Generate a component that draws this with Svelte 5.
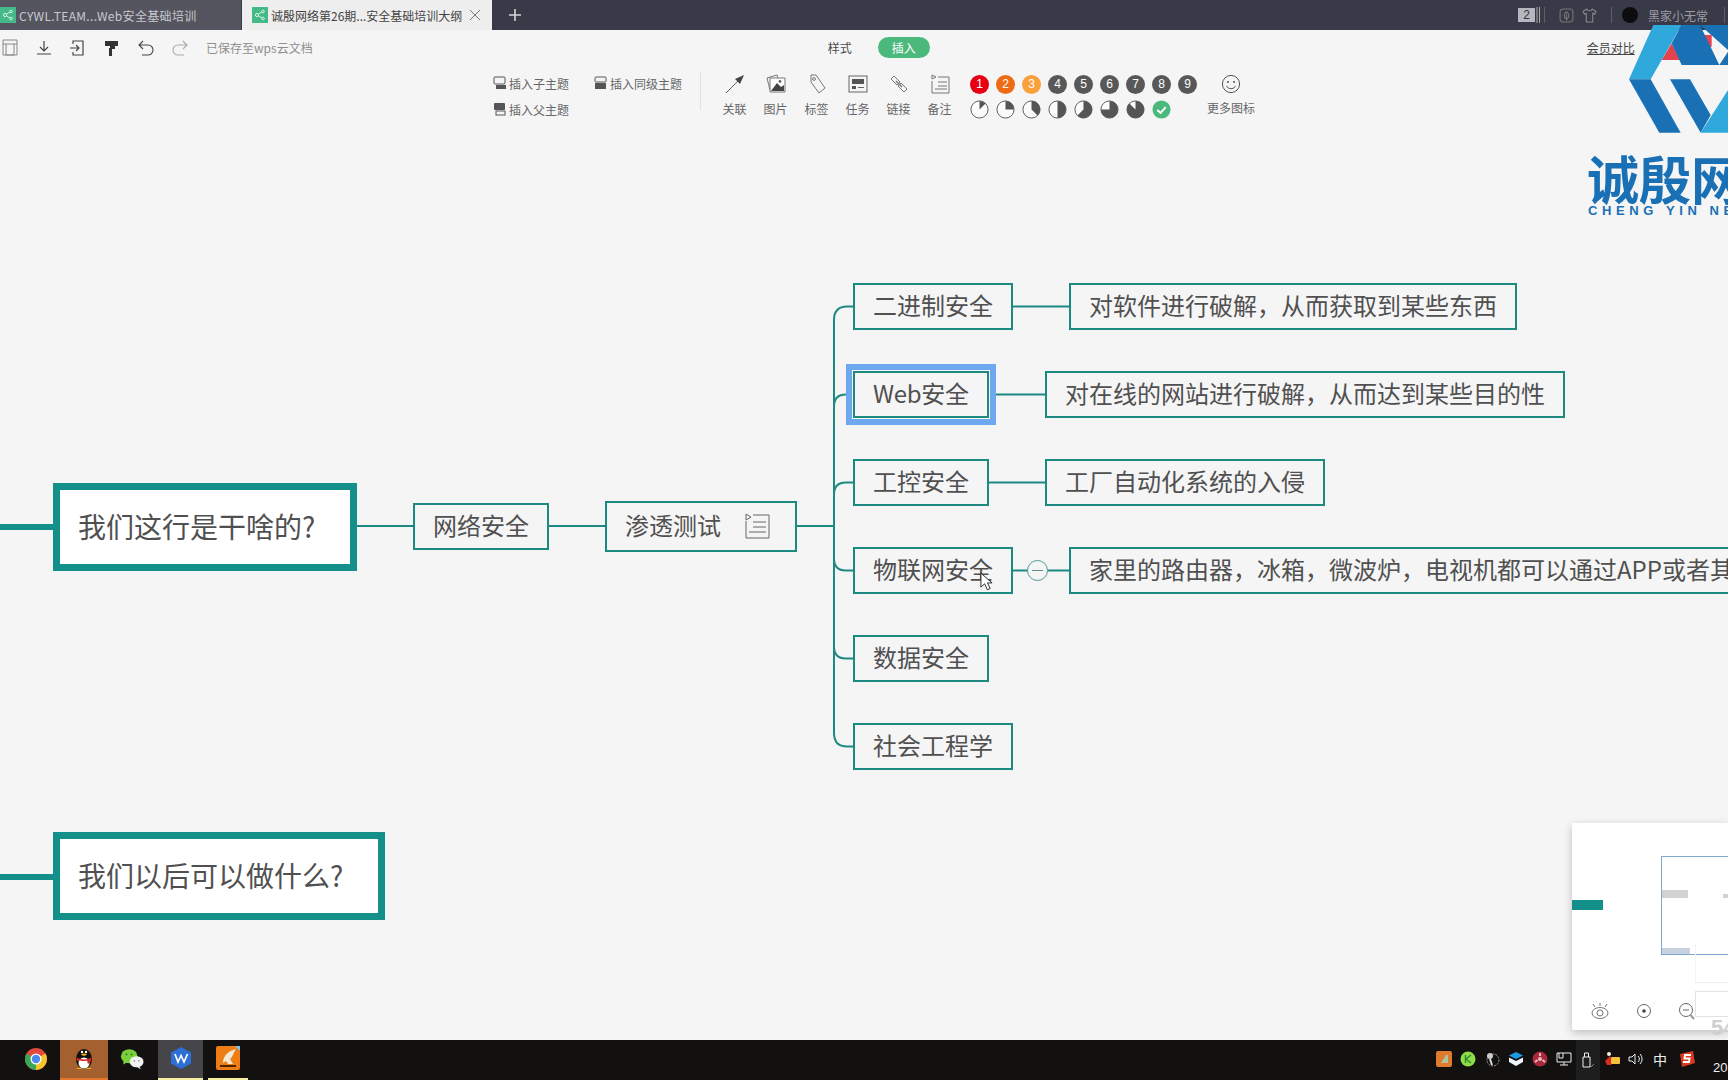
<script>
  const TOP = 126;
  const nodes = [
    { t: '二进制安全', x: 853, y: 283 },
    { t: 'Web安全', x: 853, y: 371, sel: true },
    { t: '工控安全', x: 853, y: 459 },
    { t: '物联网安全', x: 853, y: 547 },
    { t: '数据安全', x: 853, y: 635 },
    { t: '社会工程学', x: 853, y: 723 },
    { t: '对软件进行破解，从而获取到某些东西', x: 1069, y: 283 },
    { t: '对在线的网站进行破解，从而达到某些目的性', x: 1045, y: 371 },
    { t: '工厂自动化系统的入侵', x: 1045, y: 459 },
    { t: '家里的路由器，冰箱，微波炉，电视机都可以通过APP或者其它方式', x: 1069, y: 547 },
    { t: '网络安全', x: 413, y: 503 }
  ];
  const numbers = [
    { n: 1, c: '#e60012' }, { n: 2, c: '#ee6a15' }, { n: 3, c: '#f9a13a' },
    { n: 4, c: '#585858' }, { n: 5, c: '#585858' }, { n: 6, c: '#585858' },
    { n: 7, c: '#585858' }, { n: 8, c: '#585858' }, { n: 9, c: '#585858' }
  ];
  function pie(k) {
    const a = (k / 8) * 2 * Math.PI;
    const x = 10 + 9 * Math.sin(a);
    const y = 10 - 9 * Math.cos(a);
    return `M10 10 L10 1 A9 9 0 ${k > 4 ? 1 : 0} 1 ${x.toFixed(2)} ${y.toFixed(2)} Z`;
  }
  const downs = [394.5, 482.5];
  const ups = [570.5, 658.5];
</script>

<div class="app">
  <header class="titlebar">
    <div class="tab tab-off">
      <svg class="tabicon" viewBox="0 0 16 16"><rect width="16" height="16" fill="#45b987"/><g fill="none" stroke="#d9f5e8"><circle cx="5" cy="8" r="1.6"/><circle cx="11" cy="4.5" r="1.3"/><circle cx="11" cy="11.5" r="1.3"/><path d="M6.5 7.2 9.8 5M6.5 8.8 9.8 11"/></g></svg>
      <span>CYWL.TEAM...Web安全基础培训</span>
    </div>
    <div class="tab tab-on">
      <svg class="tabicon" viewBox="0 0 16 16"><rect width="16" height="16" fill="#45b987"/><g fill="none" stroke="#d9f5e8"><circle cx="5" cy="8" r="1.6"/><circle cx="11" cy="4.5" r="1.3"/><circle cx="11" cy="11.5" r="1.3"/><path d="M6.5 7.2 9.8 5M6.5 8.8 9.8 11"/></g></svg>
      <span>诚殷网络第26期...安全基础培训大纲</span>
      <svg class="close" viewBox="0 0 12 12"><path d="M1 1 11 11M11 1 1 11" stroke="#777" fill="none"/></svg>
    </div>
    <svg class="plus" viewBox="0 0 12 12"><path d="M6 0V12M0 6H12" stroke="#d5d5da" stroke-width="1.6"/></svg>
    <div class="grow"></div>
    <div class="badge">2</div>
    <svg class="bars" viewBox="0 0 6 16"><path d="M1 0V16M3.5 0V16" stroke="#aaa"/></svg>
    <div class="vsep first"></div>
    <svg class="ticon" viewBox="0 0 14 14"><rect x="1" y="1" width="12" height="12" rx="3" fill="none" stroke="#777"/><path d="M7 3.500C9.500 5 10 9 7 10.500 4 9 4.500 5 7 3.500ZM7 6V12" fill="none" stroke="#777"/></svg>
    <svg class="ticon shirt" viewBox="0 0 14 14"><path d="M4.5 1 1 3.2l1.3 2.6L4 5v8h6V5l1.7.8L13 3.2 9.5 1C9 3 5 3 4.5 1Z" fill="none" stroke="#888"/></svg>
    <div class="vsep second"></div>
    <div class="avatar"></div>
    <span class="user">黑家小无常</span>
    <div class="vsep last"></div>
  </header>

  <section class="toolbar">
    <div class="row-top">
      <div class="quick">
        <svg viewBox="0 0 18 18"><path d="M2 1H16V16H2ZM2 5H16M5 5V16H13V5" fill="none" stroke="#888"/></svg>
        <svg viewBox="0 0 18 18"><path d="M9 2V11M5 8l4 4 4-4M2 15H16" fill="none" stroke="#444" stroke-width="1.2"/></svg>
        <svg viewBox="0 0 18 18"><path d="M4 5V2H14V16H4V13M1 9H10M7 6l3 3-3 3" fill="none" stroke="#444" stroke-width="1.2"/></svg>
        <svg viewBox="0 0 18 18"><path d="M2 2H15V7H2ZM7 7H12V10H9V17H6V9H7Z" fill="#333"/></svg>
        <svg viewBox="0 0 18 18"><path d="M6 2 2 6l4 4M2 6H11a4.5 4.5 0 0 1 0 10H5" fill="none" stroke="#444" stroke-width="1.1"/></svg>
        <svg viewBox="0 0 18 18"><path d="M12 2l4 4-4 4M16 6H7a4.5 4.5 0 0 0 0 10H13" fill="none" stroke="#aaa" stroke-width="1.1"/></svg>
        <span class="saved">已保存至wps云文档</span>
      </div>
      <div class="mode">
        <span class="style-tab">样式</span>
        <span class="pill">插入</span>
      </div>
      <u class="vip">会员对比</u>
    </div>
    <div class="ribbon">
      <div class="inserts">
        <div class="ins ins-a">
          <svg viewBox="0 0 14 14"><rect x="1" y="1" width="11" height="7" rx="1" fill="none" stroke="#555"/><rect x="3" y="9" width="10" height="4" fill="#555"/></svg>插入子主题
        </div>
        <div class="ins ins-b">
          <svg viewBox="0 0 14 14"><rect x="1" y="1" width="11" height="5" rx="1" fill="none" stroke="#555"/><rect x="1" y="7" width="11" height="6" fill="#555"/></svg>插入同级主题
        </div>
        <div class="ins ins-c">
          <svg viewBox="0 0 14 14"><rect x="1" y="1" width="11" height="7" rx="1" fill="#555"/><rect x="3" y="9" width="9" height="4" fill="none" stroke="#555"/></svg>插入父主题
        </div>
      </div>
      <div class="divider"></div>
      <div class="tools">
        <div class="tool">
          <svg viewBox="0 0 22 22"><path d="M2 20 17 5" stroke="#666" stroke-width="1"/><path d="M20 2 11 6l5 5Z" fill="#444"/></svg>
          <span>关联</span>
        </div>
        <div class="tool">
          <svg viewBox="0 0 22 22"><path d="M2 5 12 2l1 3M2 5 5 17" fill="none" stroke="#777"/><path d="M5 5H20V19H5Z" fill="#fff" stroke="#777"/><path d="M6 18 12 10l4 4 3-2v6Z" fill="#444"/><circle cx="15" cy="8.5" r="1.4" fill="#666"/></svg>
          <span>图片</span>
        </div>
        <div class="tool">
          <svg viewBox="0 0 22 22"><path d="M5 2H10L19 15 13 20 5 9Z" fill="none" stroke="#777"/><circle cx="8" cy="6" r="1.4" fill="none" stroke="#777"/></svg>
          <span>标签</span>
        </div>
        <div class="tool">
          <svg viewBox="0 0 22 22"><rect x="2" y="3" width="18" height="16" fill="none" stroke="#666"/><rect x="5" y="6" width="12" height="5" fill="#555"/><rect x="5" y="13" width="4" height="3" fill="#555"/><path d="M11 14.5H17" stroke="#666"/></svg>
          <span>任务</span>
        </div>
        <div class="tool">
          <svg viewBox="0 0 22 22"><g fill="none" stroke="#777"><path d="M3 6 6 3l6 6-3 3ZM10 13l3-3 6 6-3 3Z"/><path d="M8 8l6 6" stroke-width="1.4"/></g></svg>
          <span>链接</span>
        </div>
        <div class="tool">
          <svg viewBox="0 0 22 22"><path d="M3 8V20H20V4H9M9 9H18M9 13H18M6 16H18" fill="none" stroke="#777"/><path d="M3 2 7 4 3 6Z" fill="none" stroke="#777"/></svg>
          <span>备注</span>
        </div>
      </div>
      <div class="marks">
        <div class="marks-row">
          {#each numbers as m}
            <span class="num" style="background:{m.c}">{m.n}</span>
          {/each}
        </div>
        <div class="marks-row">
          {#each [1, 2, 3, 4, 5, 6, 7] as k}
            <svg class="pie" viewBox="0 0 20 20"><circle cx="10" cy="10" r="9" fill="#fbfbfb" stroke="#555"/><path d={pie(k)} fill="#555"/></svg>
          {/each}
          <svg class="pie" viewBox="0 0 20 20"><circle cx="10" cy="10" r="9.5" fill="#4cb97c"/><path d="M5.5 10.5 9 13.5 14.5 7.5" fill="none" stroke="#fff" stroke-width="2"/></svg>
        </div>
      </div>
      <div class="more">
        <svg viewBox="0 0 20 20"><circle cx="10" cy="10" r="8.6" fill="none" stroke="#555"/><circle cx="7" cy="8" r="1" fill="#555"/><circle cx="13" cy="8" r="1" fill="#555"/><path d="M5.5 12a5 5 0 0 0 9 0" fill="none" stroke="#555"/></svg>
        <span>更多图标</span>
      </div>
    </div>
  </section>

  <main class="canvas">
    <svg class="links" viewBox="0 126 1728 914">
      <path class="thick" d="M0 527H54M0 877H54"/>
      <path class="thin" d="M357 526H413M548 526H606M796 526H834"/>
      <path class="thin" d="M853 306.5H847Q834 306.5 834 320V733Q834 746.5 847 746.5H853"/>
      {#each downs as y}
        <path class="thin" d="M853 {y}H846Q834 {y} 834 {y + 12}"/>
      {/each}
      {#each ups as y}
        <path class="thin" d="M853 {y}H846Q834 {y} 834 {y - 12}"/>
      {/each}
      <path class="thin" d="M1012 306.5H1069M989 394.5H1045M989 482.5H1045M1012 570.5H1028M1048 570.5H1069"/>
    </svg>

    {#each nodes as n}
      <div class="node" class:sel={n.sel} style="left:{n.x}px;top:{n.y - TOP}px">{n.t}</div>
    {/each}

    <div class="node tall" style="left:605px;top:{501 - TOP}px">
      <span>渗透测试</span>
      <svg viewBox="0 0 26 26"><path d="M2 8V25H25V2H9M9 9H22M9 14H22M5 19H22" fill="none" stroke="#666"/><path d="M2 1 7 4 2 7Z" fill="none" stroke="#666"/></svg>
    </div>
    <div class="root" style="left:53px;top:{483 - TOP}px">我们这行是干啥的?</div>
    <div class="root" style="left:53px;top:{832 - TOP}px">我们以后可以做什么?</div>

    <div class="fold"><span></span></div>

    <svg class="cursor" viewBox="0 0 14 20"><path d="M1 1V16L5 12.5 8 19 11 17.5 8 11.5H13Z" fill="#fff" stroke="#222"/></svg>

    <aside class="minimap">
      <div class="mm-teal"></div>
      <div class="mm-view">
        <div class="mm-grey"></div>
        <div class="mm-dot"></div>
        <div class="mm-base"></div>
      </div>
      <div class="mm-lines"></div>
      <div class="mm-box"></div>
      <svg class="mm-ic eye" viewBox="0 0 18 18"><g fill="none" stroke="#666" stroke-width=".9"><ellipse cx="9" cy="11" rx="8" ry="5.5"/><circle cx="9" cy="11" r="3"/><path d="M2 2 4 5M9 1V4M16 2 14 5"/></g></svg>
      <svg class="mm-ic target" viewBox="0 0 18 18"><circle cx="9" cy="9" r="6.5" fill="none" stroke="#666"/><circle cx="9" cy="9" r="1.8" fill="#444"/></svg>
      <svg class="mm-ic zoom" viewBox="0 0 18 18"><circle cx="8" cy="8" r="6.5" fill="none" stroke="#666"/><path d="M5 8H11" stroke="#666"/><path d="M12.5 13 16 17" stroke="#999" stroke-width="2"/></svg>
    </aside>
    <span class="scale">54</span>
  </main>

  <footer class="taskbar">
    <div class="apps">
      <div class="app-slot">
        <svg viewBox="0 0 24 24"><circle cx="12" cy="12" r="11" fill="#e2483b"/><path d="M12 12 21.5 6.5A11 11 0 0 1 12 23Z" fill="#f5c52e"/><path d="M12 12 12 23A11 11 0 0 1 2.5 6.5Z" fill="#3aa757"/><circle cx="12" cy="12" r="5.5" fill="#fff"/><circle cx="12" cy="12" r="4.2" fill="#4b8bf0"/></svg>
      </div>
      <div class="app-slot qq">
        <svg viewBox="0 0 24 24"><ellipse cx="12" cy="13" rx="8" ry="10" fill="#111"/><ellipse cx="12" cy="17" rx="5.5" ry="5.5" fill="#fff"/><path d="M4.5 11.5Q12 15.5 19.5 11.5L19 15 16 18 15 14.5Q12 15.5 8 14.5L5 15Z" fill="#d92a21"/><path d="M9 8.5Q12 6.5 15 8.5 12 11 9 8.5Z" fill="#f6b21c"/><circle cx="10" cy="6" r="1.2" fill="#fff"/><circle cx="14" cy="6" r="1.2" fill="#fff"/><path d="M5 22h5l-1 1H5ZM14 22h5v1h-4Z" fill="#f6b21c"/></svg>
      </div>
      <div class="app-slot">
        <svg viewBox="0 0 26 24"><ellipse cx="10" cy="9" rx="9" ry="7.5" fill="#7ad03a"/><path d="M4 14 3.5 18 8 15.5Z" fill="#7ad03a"/><ellipse cx="18" cy="15" rx="7.5" ry="6" fill="#f2f2f2"/><path d="M21 19.5 22.5 23 18 20.5Z" fill="#f2f2f2"/><circle cx="7" cy="7" r="1" fill="#256b10"/><circle cx="12.5" cy="7" r="1" fill="#256b10"/><circle cx="15.5" cy="14" r=".9" fill="#888"/><circle cx="20.5" cy="14" r=".9" fill="#888"/></svg>
      </div>
      <div class="app-slot wps">
        <svg viewBox="0 0 24 24"><path d="M12 1 22 6.5V17.5L12 23 2 17.5V6.5Z" fill="#2d6fd6"/><path d="M6 8 9 16 12 9.5 15 16 18.5 8" fill="none" stroke="#fff" stroke-width="1.7"/></svg>
      </div>
      <div class="app-slot last-app">
        <svg viewBox="0 0 24 24"><rect width="24" height="24" rx="2" fill="#ee7d13"/><path d="M7 17C7 10 12 5 20 3 17 7 17 11 14 13L17 18H12L10 15Z" fill="#f3e9d8"/><path d="M19 0h5v5Z" fill="#7cc4ea"/><path d="M4 20H20" stroke="#4a2500" stroke-width="2"/></svg>
      </div>
    </div>
    <div class="tray">
      <svg viewBox="0 0 16 16"><rect width="16" height="16" rx="2" fill="#e07b2e"/><path d="M5 12 10 4h2v8Z" fill="#a9c6a0"/></svg>
      <svg viewBox="0 0 16 16"><circle cx="8" cy="8" r="7.5" fill="#8fdc4a"/><path d="M5.5 4V12M11 4 6 8l5 4" fill="none" stroke="#2b8a2b" stroke-width="1.4"/></svg>
      <svg viewBox="0 0 16 16"><circle cx="9" cy="9" r="6" fill="none" stroke="#999" stroke-dasharray="2 1"/><circle cx="6" cy="5" r="3" fill="#ccc"/><path d="M6 8 8 14" stroke="#ddd" stroke-width="2"/></svg>
      <svg viewBox="0 0 16 16"><path d="M8 1 15 4.5 8 8 1 4.5Z" fill="#1d9be2"/><path d="M1 6.5 8 10 15 6.5V11L8 15 1 11Z" fill="#eef6fb"/></svg>
      <svg viewBox="0 0 16 16"><circle cx="8" cy="8" r="7.5" fill="#a8283c"/><circle cx="8" cy="8" r="2" fill="#eeb9c0"/><path d="M8 2V5M3 11l2.5-2M13 11l-2.5-2" stroke="#eeb9c0" stroke-width="2"/></svg>
      <svg viewBox="0 0 16 16"><path d="M1 2H15V11H1ZM3 2V7H7V2M8 11V14M4 14H12" fill="none" stroke="#eee"/></svg>
      <div class="usb"><svg viewBox="0 0 16 16"><path d="M3 5H10V15H3ZM4.500 5V1H8.500V5" fill="none" stroke="#eee"/><path d="M11 15l3-3" stroke="#888"/></svg></div>
      <svg viewBox="0 0 16 16"><path d="M1 10 6 5l3 5-2 4H3Z" fill="#d92a21"/><circle cx="5" cy="3" r="2" fill="#f3f0d8"/><rect x="7" y="6" width="9" height="7" rx="1" fill="#f4c13a"/></svg>
      <svg viewBox="0 0 16 16"><path d="M1 6H4L7 3V13L4 10H1Z" fill="none" stroke="#eee"/><path d="M10 5a4 4 0 0 1 0 6M12 3a7 7 0 0 1 0 10" fill="none" stroke="#eee"/></svg>
      <span class="ime">中</span>
      <svg class="sogou" viewBox="0 0 16 16"><path d="M1 3 14 0 16 12 3 16Z" fill="#d93a20"/><path d="M12 4H6L5.500 7.500H10.500L10 11H4" fill="none" stroke="#fff" stroke-width="2"/></svg>
      <span class="clock">20</span>
    </div>
  </footer>

  <div class="logo">
    <svg viewBox="0 0 864 420">
      <path d="M665 180 720 180 695 130Z" fill="#e2434f"/>
      <path d="M745 105H815V140H765Z" fill="#e2434f"/>
      <text x="757" y="138" class="logo-red">+加会</text>
      <path d="M640 75H725L632 238H567Z" fill="#2fa8dc"/>
      <path d="M567 238H632L722 398H658Z" fill="#1a70b5"/>
      <path d="M725 75 695 130 725 195H864V155L838 195 780 75Z" fill="#1a70b5"/>
      <path d="M780 75H864V150Z" fill="#1a70b5"/>
      <path d="M690 238H750L812 345 782 398Z" fill="#1a70b5"/>
      <path d="M782 398 864 270V398Z" fill="#2fa8dc"/>
    </svg>
    <div class="logo-cn">诚殷网</div>
    <div class="logo-en">CHENG YIN NE</div>
  </div>
</div>

<style>
  :global(body) { margin: 0; background: #f5f5f6; overflow: hidden; }
  .app {
    position: relative; width: 1728px; height: 1080px; overflow: hidden;
    display: flex; flex-direction: column;
    font-family: "Noto Sans CJK SC", "Liberation Sans", sans-serif; color: #4a4a4a;
  }
  .titlebar { height: 30px; background: #393a47; display: flex; align-items: center; flex: none; }
  .tab { height: 30px; display: flex; align-items: center; font-size: 12px; box-sizing: border-box; }
  .tabicon { width: 16px; height: 16px; flex: none; margin-right: 3px; }
  .tab-off { width: 241px; background: #55555f; color: #c9c9cf; margin-right: 1px; letter-spacing: .34px; }
  .tab-on { width: 250px; background: #eeeeee; color: #444; padding-left: 10px; }
  .close { width: 12px; height: 12px; margin-left: 7px; }
  .plus { width: 12px; height: 12px; margin-left: 17px; }
  .grow { flex: 1; }
  .badge { width: 17px; height: 14px; background: #b5b6bf; color: #333; font: 12px/14px "Liberation Sans", sans-serif; text-align: center; }
  .bars { width: 6px; height: 16px; margin-left: 1px; }
  .vsep { width: 1px; height: 16px; background: #5c5d69; }
  .vsep.first { margin: 0 14px 0 2px; }
  .vsep.second { margin: 0 10px 0 14px; }
  .vsep.last { margin: 0 3px 0 16px; }
  .ticon { width: 15px; height: 15px; }
  .shirt { margin-left: 8px; }
  .avatar { width: 16px; height: 16px; border-radius: 50%; background: #0c0c0e; }
  .user { font-size: 12px; color: #9b9ca6; margin-left: 10px; }

  .toolbar { height: 96px; flex: none; background: #f5f5f6; border-bottom: 1px solid #e4e4e4; box-sizing: content-box; margin-bottom: -1px; }
  .row-top { height: 35px; display: flex; align-items: center; position: relative; }
  .quick { display: flex; align-items: center; gap: 16px; padding-left: 1px; }
  .quick svg { width: 18px; height: 18px; }
  .saved { font-size: 12px; color: #8f8f8f; margin-left: 1px; }
  .mode { display: flex; align-items: center; gap: 26px; margin-left: 515px; }
  .style-tab { font-size: 12px; }
  .pill { width: 52px; height: 21px; border-radius: 11px; background: #4cb97c; color: #fff; font-size: 12px; line-height: 21px; text-align: center; }
  .vip { font-size: 12px; margin-left: 657px; color: #444; }

  .ribbon { height: 61px; display: flex; align-items: flex-start; }
  .inserts { position: relative; width: 700px; height: 60px; flex: none; font-size: 12px; color: #666; }
  .ins { position: absolute; display: flex; align-items: center; gap: 2px; height: 16px; }
  .ins svg { width: 14px; height: 14px; }
  .ins-a { left: 493px; top: 10px; }
  .ins-b { left: 594px; top: 10px; }
  .ins-c { left: 493px; top: 36px; }
  .divider { width: 1px; height: 38px; margin-top: 7px; background: #e2e2e2; flex: none; }
  .tools { display: flex; margin-left: 13px; flex: none; }
  .tool { width: 41px; display: flex; flex-direction: column; align-items: center; font-size: 12px; color: #666; padding-top: 8px; box-sizing: border-box; }
  .tool svg { width: 22px; height: 22px; margin-bottom: 5px; }
  .marks { margin-left: 10px; display: flex; flex-direction: column; gap: 7px; padding-top: 10px; flex: none; }
  .marks-row { display: flex; gap: 7px; height: 19px; }
  .marks-row + .marks-row { margin-top: -1px; }
  .num { width: 19px; height: 19px; border-radius: 50%; color: #fff; font: 12px/19px "Liberation Sans", sans-serif; text-align: center; }
  .pie { width: 19px; height: 19px; }
  .more { margin-left: 10px; display: flex; flex-direction: column; align-items: center; font-size: 12px; color: #666; padding-top: 9px; flex: none; }
  .more svg { width: 20px; height: 20px; margin-bottom: 5px; }

  .canvas { flex: 1; position: relative; background: #f5f5f6; }
  .links { position: absolute; inset: 0; width: 1728px; height: 914px; }
  .thin { fill: none; stroke: #1d8a82; stroke-width: 2; }
  .thick { fill: none; stroke: #14908a; stroke-width: 6; }
  .node {
    position: absolute; height: 47px; box-sizing: border-box; border: 2px solid #1d8a82;
    padding: 0 18px; font-size: 24px; line-height: 39px; white-space: nowrap; color: #505050; background: #f5f5f6;
  }
  .node.sel { width: 136px; letter-spacing: -.3px; box-shadow: 0 0 0 1px #f5f5f6, 0 0 0 7px #6ea9ef; }
  .tall { height: 51px; width: 192px; display: flex; align-items: center; line-height: normal; padding-bottom: 5px; }
  .tall svg { width: 26px; height: 26px; margin-left: 23px; margin-top: 4px; }
  .root {
    position: absolute; height: 88px; box-sizing: border-box; border: 7px solid #14908a; background: #fff;
    padding: 0 35px 0 18px; font-size: 28px; line-height: 73px; white-space: nowrap; color: #505050;
  }
  .fold { position: absolute; left: 1027px; top: 434px; width: 21px; height: 21px; box-sizing: border-box; border: 1px solid #4b9a94; border-radius: 50%; background: #f5f5f6; display: flex; align-items: center; justify-content: center; }
  .fold span { width: 11px; height: 1px; background: #5a8f8b; }
  .cursor { position: absolute; left: 980px; top: 446px; width: 13px; height: 19px; }

  .minimap { position: absolute; left: 1572px; top: 697px; width: 156px; height: 207px; background: #fff; box-shadow: 0 3px 10px rgba(0,0,0,.22); border-radius: 2px 0 0 2px; }
  .mm-teal { position: absolute; left: 0; top: 77px; width: 31px; height: 10px; background: #14908a; }
  .mm-view { position: absolute; left: 89px; top: 33px; width: 70px; height: 99px; border: 1px solid #7fa9d4; box-sizing: border-box; }
  .mm-grey { position: absolute; left: 0; top: 33px; width: 26px; height: 8px; background: #d2d2d2; }
  .mm-dot { position: absolute; left: 61px; top: 37px; width: 8px; height: 4px; background: #d2d2d2; }
  .mm-base { position: absolute; left: 0; bottom: 0; width: 28px; height: 6px; background: #c6d2de; }
  .mm-lines { position: absolute; left: 123px; top: 122px; width: 33px; height: 38px; border-bottom: 1px solid #eee; border-left: 1px dotted #e8e8e8; box-sizing: border-box; }
  .mm-box { position: absolute; left: 123px; top: 168px; width: 40px; height: 26px; border: 1px solid #e2e2e2; box-sizing: border-box; }
  .mm-ic { position: absolute; width: 18px; height: 18px; top: 179px; }
  .eye { left: 19px; }
  .target { left: 63px; }
  .zoom { left: 106px; }
  .scale { position: absolute; left: 1711px; top: 889px; font: bold 22px "Liberation Sans", sans-serif; color: #cfcfcf; }

  .taskbar { height: 40px; flex: none; background: #121110; display: flex; align-items: stretch; position: relative; }
  .apps { display: flex; width: 1400px; }
  .app-slot { width: 48px; display: flex; align-items: center; justify-content: center; box-sizing: border-box; padding-bottom: 3px; flex: none; }
  .app-slot:first-child { margin-left: 12px; }
  .app-slot svg { width: 24px; height: 24px; }
  .qq { background: #a5602f; border-bottom: 2px solid #e8762a; }
  .wps { background: #45454a; border-bottom: 2px solid #f4f0a0; margin-left: 2px; width: 45px; }
  .last-app { margin-left: 5px; width: 40px; border-bottom: 2px solid #f4f0a0; }
  .tray { display: flex; align-items: center; gap: 8px; padding-left: 36px; color: #eee; position: relative; flex: 1; padding-bottom: 2px; }
  .tray svg { width: 16px; height: 16px; flex: none; }
  .usb { width: 24px; height: 40px; margin-bottom: -2px; background: #1e1e1e; display: flex; align-items: center; justify-content: center; margin-left: -4px; margin-right: -4px; }
  .ime { font-size: 14px; width: 16px; text-align: center; }
  .sogou { margin-left: 3px; }
  .clock { font: 13px "Liberation Sans", sans-serif; position: absolute; left: 313px; top: 20px; }

  .logo { position: absolute; left: 1440px; top: 0; width: 288px; height: 230px; overflow: hidden; pointer-events: none; }
  .logo svg { display: block; width: 288px; height: 140px; }
  .logo-red { font: bold 15px "Noto Sans CJK SC", sans-serif; fill: #fff; }
  .logo-cn { position: absolute; left: 147px; top: 150px; font-size: 52px; line-height: 56px; font-weight: 700; color: #1a70b5; white-space: nowrap; }
  .logo-en { position: absolute; left: 148px; top: 203px; font: 700 13px/16px "Liberation Sans", sans-serif; letter-spacing: 4.6px; color: #1a70b5; white-space: nowrap; }
</style>
